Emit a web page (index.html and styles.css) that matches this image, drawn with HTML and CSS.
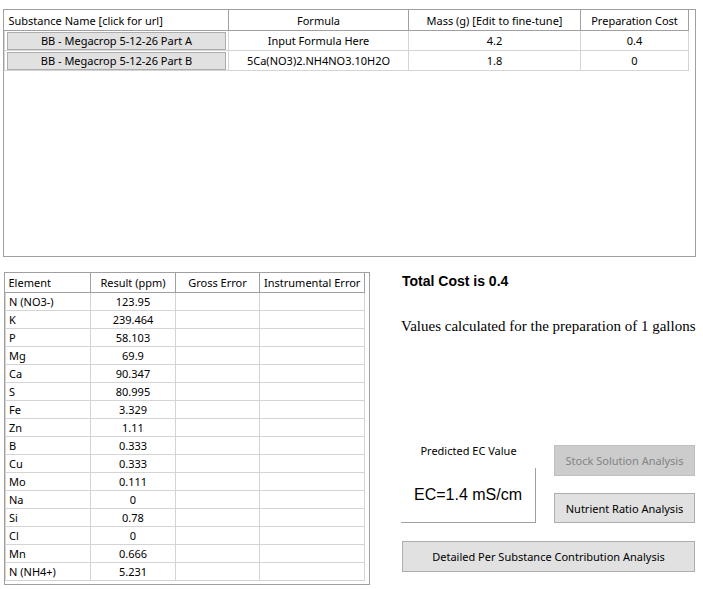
FILE: index.html
```html
<!DOCTYPE html>
<html>
<head>
<meta charset="utf-8">
<link rel="stylesheet" href="styles.css">
</head>
<body>
<div class="top-panel">
  <table class="sub-grid">
    <colgroup><col class="c1"><col class="c2"><col class="c3"><col class="c4"></colgroup>
    <thead>
      <tr><th class="left">Substance Name [click for url]</th><th>Formula</th><th>Mass (g) [Edit to fine-tune]</th><th>Preparation Cost</th></tr>
    </thead>
    <tbody>
      <tr><td class="btn-cell"><div class="cell-btn">BB - Megacrop 5-12-26 Part A</div></td><td>Input Formula Here</td><td>4.2</td><td>0.4</td></tr>
      <tr><td class="btn-cell"><div class="cell-btn">BB - Megacrop 5-12-26 Part B</div></td><td>5Ca(NO3)2.NH4NO3.10H2O</td><td>1.8</td><td>0</td></tr>
    </tbody>
  </table>
</div>
<div class="bottom">
  <div class="el-panel">
    <table class="el-grid">
      <colgroup><col class="e1"><col class="e2"><col class="e3"><col class="e4"></colgroup>
      <thead>
        <tr><th class="left">Element</th><th>Result (ppm)</th><th>Gross Error</th><th>Instrumental Error</th></tr>
      </thead>
      <tbody>
        <tr><td class="left">N (NO3-)</td><td>123.95</td><td></td><td></td></tr>
        <tr><td class="left">K</td><td>239.464</td><td></td><td></td></tr>
        <tr><td class="left">P</td><td>58.103</td><td></td><td></td></tr>
        <tr><td class="left">Mg</td><td>69.9</td><td></td><td></td></tr>
        <tr><td class="left">Ca</td><td>90.347</td><td></td><td></td></tr>
        <tr><td class="left">S</td><td>80.995</td><td></td><td></td></tr>
        <tr><td class="left">Fe</td><td>3.329</td><td></td><td></td></tr>
        <tr><td class="left">Zn</td><td>1.11</td><td></td><td></td></tr>
        <tr><td class="left">B</td><td>0.333</td><td></td><td></td></tr>
        <tr><td class="left">Cu</td><td>0.333</td><td></td><td></td></tr>
        <tr><td class="left">Mo</td><td>0.111</td><td></td><td></td></tr>
        <tr><td class="left">Na</td><td>0</td><td></td><td></td></tr>
        <tr><td class="left">Si</td><td>0.78</td><td></td><td></td></tr>
        <tr><td class="left">Cl</td><td>0</td><td></td><td></td></tr>
        <tr><td class="left">Mn</td><td>0.666</td><td></td><td></td></tr>
        <tr><td class="left">N (NH4+)</td><td>5.231</td><td></td><td></td></tr>
      </tbody>
    </table>
  </div>
  <div class="right">
    <div class="total">Total Cost is 0.4</div>
    <div class="values">Values calculated for the preparation of 1 gallons</div>
    <div class="ec-row">
      <div class="ec-panel">
        <div class="ec-label">Predicted EC Value</div>
        <div class="ec-box">EC=1.4 mS/cm</div>
      </div>
      <div class="btn-col">
        <div class="btn disabled">Stock Solution Analysis</div>
        <div class="btn nutrient">Nutrient Ratio Analysis</div>
      </div>
    </div>
    <div class="btn detailed">Detailed Per Substance Contribution Analysis</div>
  </div>
</div>
</body>
</html>
```
FILE: styles.css
```css
html, body {
  margin: 0;
  padding: 0;
  background: #ffffff;
}
body {
  font-family: "Noto Sans", "Open Sans", sans-serif;
  font-size: 11px;
  color: #000;
}
.top-panel {
  margin: 9px 7px 0 3px;
  height: 246px;
  border: 1px solid #a0a0a0;
}
table {
  border-collapse: collapse;
  table-layout: fixed;
}
.sub-grid {
  width: 684px;
}
.sub-grid .c1 { width: 224px; }
.sub-grid .c2 { width: 180px; }
.sub-grid .c3 { width: 172px; }
.sub-grid .c4 { width: 108px; }
th {
  font-weight: normal;
  background: #fff;
  border-right: 1px solid #a0a0a0;
  border-bottom: 1px solid #a0a0a0;
  text-align: center;
  padding: 0 4px;
  white-space: nowrap;
  overflow: hidden;
}
th.left, td.left { text-align: left; }
.sub-grid th { height: 20px; }
td {
  border: 1px solid #d4d4d4;
  text-align: center;
  padding: 0 4px;
  white-space: nowrap;
  overflow: hidden;
}
.sub-grid td { height: 19px; }
.sub-grid td.btn-cell { padding: 0 2px; }
.cell-btn {
  background: #e1e1e1;
  border: 1px solid #adadad;
  height: 16px;
  line-height: 16px;
  text-align: center;
}
.bottom {
  display: flex;
  margin-top: 15px;
}
.el-panel {
  margin-left: 4px;
  width: 364px;
  height: 311px;
  border: 1px solid #a0a0a0;
}
.el-grid { width: 359px; }
.el-grid .e1 { width: 85px; }
.el-grid .e2 { width: 85px; }
.el-grid .e3 { width: 84px; }
.el-grid .e4 { width: 105px; }
.el-grid th { height: 19px; }
.el-grid td { height: 17px; }
.el-grid td.left { padding-left: 3px; }
.el-grid th.left { padding-left: 3px; }
.right {
  margin-left: 31px;
  width: 294px;
  display: flex;
  flex-direction: column;
}
.total {
  font-family: "Liberation Sans", Arial, sans-serif;
  font-weight: bold;
  font-size: 14px;
  line-height: 18px;
  padding-left: 1px;
}
.values {
  font-family: "Liberation Serif", "Times New Roman", serif;
  font-size: 15px;
  line-height: 20px;
  margin-top: 26px;
  white-space: nowrap;
}
.ec-row {
  display: flex;
  margin-top: 104px;
}
.ec-panel {
  width: 135px;
  display: flex;
  flex-direction: column;
}
.ec-label {
  padding-top: 4px;
  line-height: 14px;
  text-align: center;
}
.ec-box {
  margin-top: 10px;
  height: 54px;
  border-right: 1px solid #a0a0a0;
  border-bottom: 1px solid #a0a0a0;
  font-family: "Liberation Sans", Arial, sans-serif;
  font-size: 16px;
  display: flex;
  align-items: center;
  justify-content: center;
}
.btn-col {
  margin-left: 18px;
  width: 141px;
  padding-top: 5px;
  display: flex;
  flex-direction: column;
  gap: 17px;
}
.btn {
  background: #e1e1e1;
  border: 1px solid #adadad;
  display: flex;
  align-items: center;
  justify-content: center;
  box-sizing: border-box;
}
.btn.disabled {
  background: #cccccc;
  border-color: #bfbfbf;
  color: #838383;
  height: 31px;
}
.btn.nutrient { height: 30px; }
.btn.detailed {
  margin-top: 18px;
  margin-left: 1px;
  width: 293px;
  height: 31px;
}
```
